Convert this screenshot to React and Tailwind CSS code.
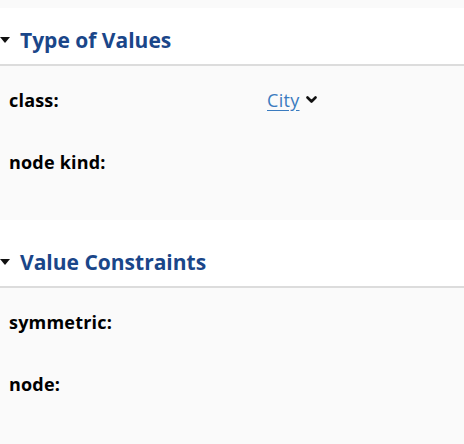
import React from "react";

function Caret() {
  return (
    <svg width="10" height="6" viewBox="0 0 10 6" className="shrink-0">
      <path d="M0 0 L10 0 L5 6 Z" fill="#111" />
    </svg>
  );
}

function Chevron() {
  return (
    <svg width="11" height="8" viewBox="0 0 11 8" className="ml-[6px]">
      <path d="M1.5 1.5 L5.5 5.5 L9.5 1.5" fill="none" stroke="#111" strokeWidth="2.6" strokeLinecap="round" strokeLinejoin="round" />
    </svg>
  );
}

function Header({ title, h }) {
  return (
    <div className={`bg-white border-b-2 border-[#dcdcdc] flex items-end ${h}`}>
      <div className="flex items-center gap-[10px] pb-[14px]">
        <Caret />
        <span className="text-[21px] font-bold text-[#1a4689] leading-[20px]">{title}</span>
      </div>
    </div>
  );
}

function Row({ label, children }) {
  return (
    <div className="flex items-center h-[62px]">
      <div className="w-[267px] pl-[9px] text-[18px] font-bold tracking-[0.2px] text-black">{label}</div>
      <div className="flex items-center">{children}</div>
    </div>
  );
}

export default function App() {
  return (
    <div className="w-[464px] h-[444px] overflow-hidden bg-white" style={{ fontFamily: '"Open Sans", "Noto Sans", sans-serif' }}>
      <div className="h-[8px] bg-[#fafafa]" />
      <Header title="Type of Values" h="h-[58px]" />
      <div className="bg-[#fafafa] h-[154px] pt-[3px]">
        <Row label="class:">
          <span className="text-[18px] tracking-[0.3px] text-[#3a7bbf] underline underline-offset-[3px]">City</span>
          <Chevron />
        </Row>
        <Row label="node kind:" />
      </div>
      <Header title="Value Constraints" h="h-[68px]" />
      <div className="bg-[#fafafa] h-[160px] pt-[3px]">
        <Row label="symmetric:" />
        <Row label="node:" />
      </div>
    </div>
  );
}
